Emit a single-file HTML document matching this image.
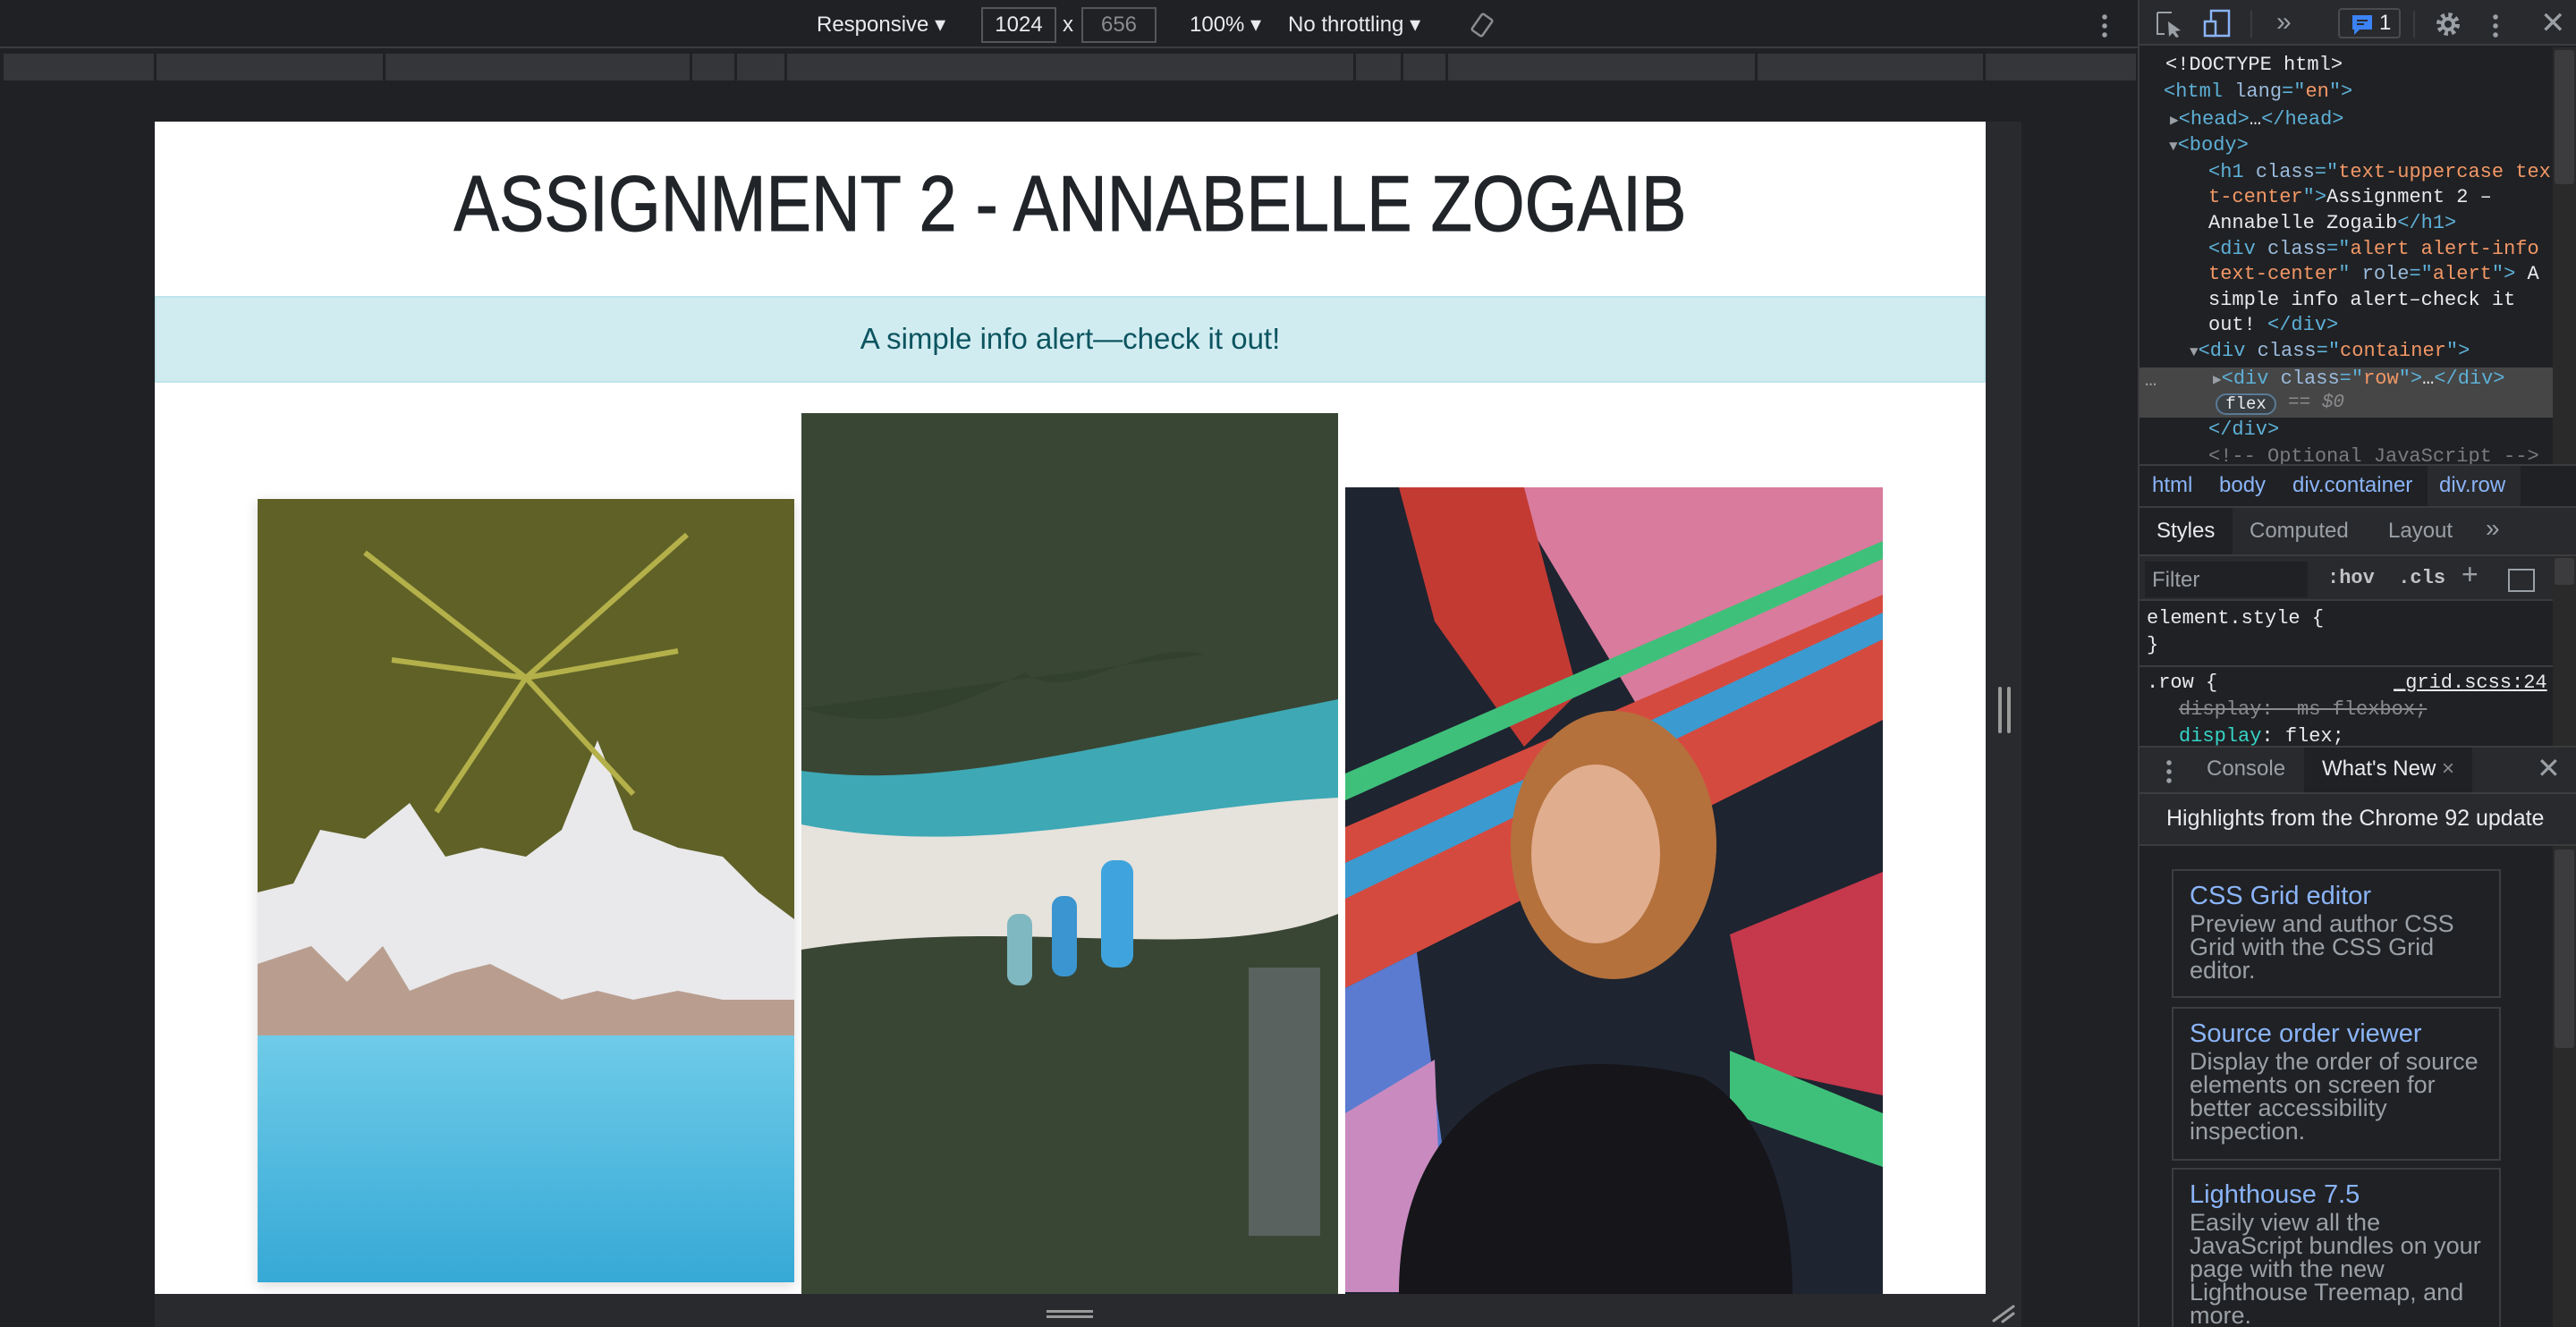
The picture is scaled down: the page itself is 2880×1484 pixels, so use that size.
<!DOCTYPE html>
<html><head><meta charset="utf-8"><style>
*{margin:0;padding:0;box-sizing:border-box}
html,body{width:2880px;height:1484px;overflow:hidden}
body{background:#202124;position:relative;font-family:"Liberation Sans",sans-serif}
.a{position:absolute}
.mono{font-family:"Liberation Mono",monospace}
.tag{color:#5db0d7}.at{color:#9bbbdc}.val{color:#f29766}.txt{color:#e8eaed}
.tl{position:absolute;font-size:22px;line-height:28px;white-space:nowrap}
.card{position:absolute;left:2428px;width:368px;border:2px solid #3c3d41;padding:12px 0 0 18px;overflow:hidden}
.card h3{font-weight:normal;color:#8ab4f8;font-size:29px;line-height:32px}
.card p{color:#9aa0a6;font-size:27px;line-height:26px;margin-top:2px;width:330px}
</style></head><body>
<!-- top toolbar -->
<div class="a" style="left:0;top:0;width:2390px;height:54px;background:#202124;border-bottom:2px solid #3c3c3f"></div>
<div class="a" style="left:913px;top:13px;color:#e8eaed;font-size:24px">Responsive ▾</div>
<div class="a" style="left:1097px;top:8px;width:84px;height:40px;border:2px solid #55565a;color:#e8eaed;font-size:24px;text-align:center;line-height:36px">1024</div>
<div class="a" style="left:1188px;top:14px;color:#e8eaed;font-size:24px">x</div>
<div class="a" style="left:1209px;top:8px;width:84px;height:40px;border:2px solid #55565a;color:#8a8b8e;font-size:24px;text-align:center;line-height:36px">656</div>
<div class="a" style="left:1330px;top:13px;color:#e8eaed;font-size:24px">100% ▾</div>
<div class="a" style="left:1440px;top:13px;color:#e8eaed;font-size:24px">No throttling ▾</div>
<svg class="a" style="left:1642px;top:12px" width="30" height="32" viewBox="0 0 30 32"><rect x="8" y="5" width="14" height="22" rx="2" transform="rotate(35 15 16)" fill="none" stroke="#8a8b8e" stroke-width="2.5"/></svg>
<div class="a" style="left:2350px;top:14px;width:6px;height:28px;background:radial-gradient(circle,#9aa0a6 2.5px,transparent 3px) 0 0/6px 10px"></div>
<!-- media bar -->
<div class="a" style="left:4px;top:60px;width:2384px;height:30px;background:#35363a"></div>
<div class="a" style="left:172px;top:60px;width:3px;height:30px;background:#202124"></div>
<div class="a" style="left:428px;top:60px;width:3px;height:30px;background:#202124"></div>
<div class="a" style="left:771px;top:60px;width:3px;height:30px;background:#202124"></div>
<div class="a" style="left:821px;top:60px;width:3px;height:30px;background:#202124"></div>
<div class="a" style="left:877px;top:60px;width:3px;height:30px;background:#202124"></div>
<div class="a" style="left:1513px;top:60px;width:3px;height:30px;background:#202124"></div>
<div class="a" style="left:1566px;top:60px;width:3px;height:30px;background:#202124"></div>
<div class="a" style="left:1616px;top:60px;width:3px;height:30px;background:#202124"></div>
<div class="a" style="left:1962px;top:60px;width:3px;height:30px;background:#202124"></div>
<div class="a" style="left:2217px;top:60px;width:3px;height:30px;background:#202124"></div>
<!-- gutter -->
<div class="a" style="left:2220px;top:136px;width:40px;height:1311px;background:#292a2e"></div>
<div class="a" style="left:2234px;top:768px;width:4px;height:52px;background:#9a9a9a;border-radius:2px"></div>
<div class="a" style="left:2244px;top:768px;width:4px;height:52px;background:#9a9a9a;border-radius:2px"></div>
<div class="a" style="left:173px;top:1447px;width:2087px;height:37px;background:#292a2e"></div>
<div class="a" style="left:1170px;top:1465px;width:52px;height:3px;background:#9a9a9a;box-shadow:0 6px 0 #9a9a9a"></div>
<svg class="a" style="left:2225px;top:1455px" width="30" height="25"><path d="M4 22L26 6M14 23L26 14" stroke="#9a9a9a" stroke-width="3" stroke-linecap="round"/></svg>
<!-- page -->
<div class="a" style="left:173px;top:136px;width:2047px;height:1311px;background:#fff;overflow:hidden">
 <div class="a" style="left:0;top:42px;width:2047px;text-align:center;font-size:88px;color:#212529;line-height:100px;transform:scaleX(0.86);-webkit-text-stroke:1px #212529">ASSIGNMENT 2 - ANNABELLE ZOGAIB</div>
 <div class="a" style="left:0;top:195px;width:2047px;height:97px;background:#d1ecf1;border:2px solid #bee5eb;color:#0c5460;font-size:33px;text-align:center;line-height:92px">A simple info alert—check it out!</div>
 <!-- img1 -->
 <svg class="a" style="left:115px;top:422px;box-shadow:0 4px 14px rgba(0,0,0,.15)" width="600" height="876" viewBox="0 0 600 876">
  <defs><linearGradient id="w1" x1="0" y1="0" x2="0" y2="1"><stop offset="0" stop-color="#6fcbe8"/><stop offset="1" stop-color="#36a9d6"/></linearGradient></defs>
  <rect width="600" height="876" fill="#e9e9eb"/>
  <path d="M0 0H600V470L560 440 520 400 470 390 420 370 380 270 340 370 300 400 250 390 210 400 170 340 120 380 70 370 40 430 0 440Z" fill="#5f6127"/>
  <path d="M120 60L300 200 480 40M300 200L200 350M300 200L420 330M300 200L150 180M300 200L470 170" stroke="#b4b04a" stroke-width="6" fill="none"/>
  <path d="M0 520L60 500 100 540 140 500 170 550 220 530 260 520 300 540 340 560 380 550 420 560 470 550 520 560 600 560V600H0Z" fill="#a88472" opacity=".75"/>
  <rect y="600" width="600" height="276" fill="url(#w1)"/>
 </svg>
 <!-- img2 -->
 <svg class="a" style="left:723px;top:326px" width="600" height="985" viewBox="0 0 600 985">
  <rect width="600" height="985" fill="#394634"/>
  <path d="M0 400C150 420 300 380 600 320V480C400 470 200 500 0 470Z" fill="#3ea8b5"/>
  <path d="M0 460C200 500 400 440 600 430V560C450 620 250 560 0 600Z" fill="#e6e2dc"/>
  <path d="M0 330C100 360 170 330 250 290 300 330 380 250 450 270 520 250 600 230V0H0Z" fill="#2f3d2c" opacity=".6"/>
  <rect x="335" y="500" width="36" height="120" rx="14" fill="#3fa4dd"/>
  <rect x="280" y="540" width="28" height="90" rx="12" fill="#3b95d0"/>
  <rect x="230" y="560" width="28" height="80" rx="12" fill="#7fb8c0"/>
  <rect x="500" y="620" width="80" height="300" fill="#7a7e88" opacity=".5"/>
 </svg>
 <!-- img3 -->
 <svg class="a" style="left:1331px;top:409px" width="601" height="902" viewBox="0 0 601 902">
  <rect width="601" height="902" fill="#1e2430"/>
  <path d="M200 0H601V180L360 300 180 0Z" fill="#d97b9c"/>
  <path d="M60 0H200L260 230 200 290 100 150Z" fill="#c33a33"/>
  <path d="M0 380L601 120V260L0 560Z" fill="#d54a3f"/>
  <path d="M0 420L300 280 601 140V170L0 460Z" fill="#3b9ad0"/>
  <path d="M0 320L601 60V80L0 350Z" fill="#3fc07a"/>
  <path d="M0 560L80 520 130 900H0Z" fill="#5a7bd0"/>
  <path d="M0 700L100 640 110 900H0Z" fill="#c98ac0"/>
  <path d="M430 500L601 430V680L460 650Z" fill="#c6384b"/>
  <path d="M430 630L601 700V760L430 700Z" fill="#3fc07a"/>
  <ellipse cx="300" cy="400" rx="115" ry="150" fill="#b4713c"/>
  <ellipse cx="280" cy="410" rx="72" ry="100" fill="#e0ad8e"/>
  <path d="M60 902C60 780 110 700 200 660 240 640 320 640 400 660 470 700 500 800 500 902Z" fill="#15151a"/>
 </svg>
</div>
<!-- devtools -->
<div class="a" style="left:2390px;top:0;width:490px;height:1484px;background:#202124;border-left:2px solid #3c3c3f"></div>
<div class="a" style="left:2392px;top:0;width:488px;height:51px;background:#292a2d;border-bottom:2px solid #3c3c3f"></div>
<svg class="a" style="left:2410px;top:12px" width="40" height="30"><path d="M2 2H18M2 2V26H10" stroke="#9aa0a6" stroke-width="2" fill="none"/><path d="M14 12L28 22 22 23 26 29 23 30 19 25 15 29Z" fill="#9aa0a6"/></svg>
<svg class="a" style="left:2462px;top:10px" width="34" height="32"><rect x="10" y="2" width="20" height="28" fill="none" stroke="#8ab4f8" stroke-width="2.5"/><rect x="3" y="14" width="12" height="16" fill="#292a2d" stroke="#8ab4f8" stroke-width="2.5"/></svg>
<div class="a" style="left:2516px;top:12px;width:2px;height:30px;background:#3c3c3f"></div>
<div class="a" style="left:2545px;top:8px;color:#9aa0a6;font-size:30px">»</div>
<div class="a" style="left:2614px;top:9px;width:70px;height:34px;border:2px solid #4a4b4f;border-radius:4px"></div>
<svg class="a" style="left:2628px;top:15px" width="26" height="24"><path d="M2 2H24V18H10L4 24V18H2Z" fill="#3b82f6"/><path d="M7 8H19M7 12H15" stroke="#292a2d" stroke-width="2"/></svg>
<div class="a" style="left:2660px;top:12px;color:#e8eaed;font-size:24px">1</div>
<div class="a" style="left:2698px;top:12px;width:2px;height:30px;background:#3c3c3f"></div>
<svg class="a" style="left:2722px;top:12px" width="30" height="30" viewBox="0 0 30 30"><circle cx="15" cy="15" r="10" fill="none" stroke="#9aa0a6" stroke-width="6" stroke-dasharray="4 3.85"/><circle cx="15" cy="15" r="8" fill="#9aa0a6"/><circle cx="15" cy="15" r="4" fill="#292a2d"/></svg>
<div class="a" style="left:2787px;top:14px;width:6px;height:28px;background:radial-gradient(circle,#9aa0a6 2.5px,transparent 3px) 0 0/6px 10px"></div>
<div class="a" style="left:2840px;top:6px;color:#9aa0a6;font-size:34px">✕</div>
<!-- tree -->
<div class="a" style="left:2854px;top:53px;width:26px;height:468px;background:#2a2a2b"></div>
<div class="a" style="left:2856px;top:56px;width:22px;height:150px;background:#3c3c3f;border-radius:3px"></div>
<div class="a" style="left:2392px;top:411px;width:462px;height:56px;background:#464646"></div>
<div class="mono">
<div class="tl txt" style="left:2421px;top:59px">&lt;!DOCTYPE html&gt;</div>
<div class="tl" style="left:2419px;top:89px"><span class="tag">&lt;html</span> <span class="at">lang</span><span class="tag">="</span><span class="val">en</span><span class="tag">"&gt;</span></div>
<div class="tl" style="left:2426px;top:120px"><span style="color:#9aa0a6;font-size:16px">▶</span><span class="tag">&lt;head&gt;</span><span class="txt">…</span><span class="tag">&lt;/head&gt;</span></div>
<div class="tl" style="left:2425px;top:149px"><span style="color:#9aa0a6;font-size:16px">▼</span><span class="tag">&lt;body&gt;</span></div>
<div class="tl" style="left:2469px;top:179px"><span class="tag">&lt;h1</span> <span class="at">class</span><span class="tag">="</span><span class="val">text-uppercase tex</span></div>
<div class="tl" style="left:2469px;top:207px"><span class="val">t-center</span><span class="tag">"&gt;</span><span class="txt">Assignment 2 –</span></div>
<div class="tl" style="left:2469px;top:236px"><span class="txt">Annabelle Zogaib</span><span class="tag">&lt;/h1&gt;</span></div>
<div class="tl" style="left:2469px;top:265px"><span class="tag">&lt;div</span> <span class="at">class</span><span class="tag">="</span><span class="val">alert alert-info</span></div>
<div class="tl" style="left:2469px;top:293px"><span class="val">text-center</span><span class="tag">"</span> <span class="at">role</span><span class="tag">="</span><span class="val">alert</span><span class="tag">"&gt;</span> <span class="txt">A</span></div>
<div class="tl txt" style="left:2469px;top:322px">simple info alert–check it</div>
<div class="tl" style="left:2469px;top:350px"><span class="txt">out!</span> <span class="tag">&lt;/div&gt;</span></div>
<div class="tl" style="left:2448px;top:379px"><span style="color:#9aa0a6;font-size:16px">▼</span><span class="tag">&lt;div</span> <span class="at">class</span><span class="tag">="</span><span class="val">container</span><span class="tag">"&gt;</span></div>
<div class="tl" style="left:2398px;top:412px;color:#9aa0a6">…</div>
<div class="tl" style="left:2474px;top:410px"><span style="color:#9aa0a6;font-size:16px">▶</span><span class="tag">&lt;div</span> <span class="at">class</span><span class="tag">="</span><span class="val">row</span><span class="tag">"&gt;</span><span class="txt">…</span><span class="tag">&lt;/div&gt;</span></div>
<div class="a" style="left:2477px;top:440px;width:68px;height:24px;border:2px solid #5a7a96;border-radius:12px;background:#3a3f44;color:#e8eaed;font-size:19px;text-align:center;line-height:20px">flex</div>
<div class="tl" style="left:2558px;top:437px;color:#8a8b8e;font-size:21px">== <i>$0</i></div>
<div class="tl" style="left:2469px;top:467px"><span class="tag">&lt;/div&gt;</span></div>
<div class="tl" style="left:2469px;top:497px;color:#7a7b7e;height:22px;overflow:hidden">&lt;!-- Optional JavaScript --&gt;</div>
</div>
<!-- breadcrumbs -->
<div class="a" style="left:2392px;top:519px;width:488px;height:2px;background:#3c3c3f"></div>
<div class="a" style="left:2714px;top:521px;width:104px;height:46px;background:#292a2d"></div>
<div class="a" style="left:2406px;top:529px;font-size:24px;color:#8ab4f8">html</div>
<div class="a" style="left:2481px;top:529px;font-size:24px;color:#8ab4f8">body</div>
<div class="a" style="left:2563px;top:529px;font-size:24px;color:#8ab4f8">div.container</div>
<div class="a" style="left:2727px;top:529px;font-size:24px;color:#8ab4f8">div.row</div>
<!-- styles tabs -->
<div class="a" style="left:2392px;top:566px;width:488px;height:56px;background:#292a2d;border-top:2px solid #3c3c3f;border-bottom:2px solid #3c3c3f"></div>
<div class="a" style="left:2392px;top:568px;width:104px;height:52px;background:#202124"></div>
<div class="a" style="left:2411px;top:580px;font-size:24px;color:#e8eaed">Styles</div>
<div class="a" style="left:2515px;top:580px;font-size:24px;color:#9aa0a6">Computed</div>
<div class="a" style="left:2670px;top:580px;font-size:24px;color:#9aa0a6">Layout</div>
<div class="a" style="left:2779px;top:575px;font-size:28px;color:#9aa0a6">»</div>
<div class="a" style="left:2392px;top:622px;width:462px;height:50px;background:#292a2d;border-bottom:2px solid #3c3c3f"></div>
<div class="a" style="left:2398px;top:628px;width:182px;height:40px;background:#202124;color:#9aa0a6;font-size:24px;padding:7px 0 0 8px">Filter</div>
<div class="a mono" style="left:2602px;top:634px;font-size:22px;color:#c0c2c5;font-weight:bold">:hov&nbsp;&nbsp;.cls</div>
<div class="a" style="left:2752px;top:624px;font-size:32px;color:#9aa0a6">+</div>
<div class="a" style="left:2804px;top:636px;width:30px;height:26px;border:2px solid #9aa0a6"></div>
<div class="a" style="left:2854px;top:622px;width:26px;height:214px;background:#2a2a2b"></div>
<div class="a" style="left:2856px;top:624px;width:22px;height:30px;background:#3c3c3f;border-radius:3px"></div>
<div class="mono">
<div class="tl txt" style="left:2400px;top:678px">element.style {</div>
<div class="tl txt" style="left:2400px;top:708px">}</div>
</div>
<div class="a" style="left:2392px;top:744px;width:462px;height:2px;background:#3c3c3f"></div>
<div class="mono">
<div class="tl txt" style="left:2400px;top:750px">.row {</div>
<div class="tl txt" style="left:2676px;top:750px;text-decoration:underline">_grid.scss:24</div>
<div class="tl" style="left:2436px;top:780px;color:#8a8b8e;text-decoration:line-through">display: -ms-flexbox;</div>
<div class="tl" style="left:2436px;top:810px;height:26px;overflow:hidden"><span style="color:#35d4c7">display</span><span class="txt">: flex;</span></div>
</div>
<!-- drawer -->
<div class="a" style="left:2392px;top:834px;width:488px;height:54px;background:#292a2d;border-top:2px solid #3c3c3f;border-bottom:2px solid #3c3c3f"></div>
<div class="a" style="left:2576px;top:836px;width:188px;height:50px;background:#202124"></div>
<div class="a" style="left:2422px;top:848px;width:6px;height:28px;background:radial-gradient(circle,#9aa0a6 2.5px,transparent 3px) 0 0/6px 10px"></div>
<div class="a" style="left:2467px;top:846px;font-size:24px;color:#9aa0a6">Console</div>
<div class="a" style="left:2596px;top:846px;font-size:24px;color:#e8eaed">What's New <span style="color:#8a8b8e">×</span></div>
<div class="a" style="left:2836px;top:840px;font-size:32px;color:#9aa0a6">✕</div>
<div class="a" style="left:2392px;top:888px;width:488px;height:58px;background:#292a2d;border-bottom:2px solid #3c3c3f"></div>
<div class="a" style="left:2422px;top:901px;font-size:25px;color:#e8eaed">Highlights from the Chrome 92 update</div>
<div class="a" style="left:2854px;top:946px;width:26px;height:538px;background:#2a2a2b"></div>
<div class="a" style="left:2856px;top:950px;width:22px;height:222px;background:#3c3c3f;border-radius:3px"></div>
<div class="card" style="top:972px;height:144px"><h3>CSS Grid editor</h3><p>Preview and author CSS Grid with the CSS Grid editor.</p></div>
<div class="card" style="top:1126px;height:172px"><h3>Source order viewer</h3><p>Display the order of source elements on screen for better accessibility inspection.</p></div>
<div class="card" style="top:1306px;height:178px;border-bottom:none"><h3>Lighthouse 7.5</h3><p>Easily view all the JavaScript bundles on your page with the new Lighthouse Treemap, and more.</p></div>
</body></html>
